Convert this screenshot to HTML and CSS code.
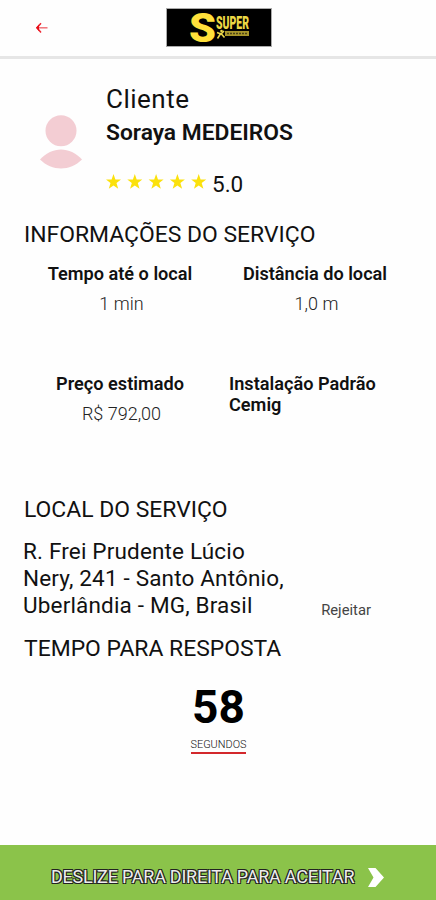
FILE: index.html
```
<!DOCTYPE html>
<html lang="pt-BR">
<head>
    <meta charset="UTF-8">
    <meta name="viewport" content="width=device-width, initial-scale=1.0">
    <title>Novo serviço</title>
    <link rel="stylesheet" href="styles.css">
</head>
<body>
    <header class="header">
        <svg class="back" viewBox="0 0 14 12" width="14" height="12">
            <path d="M6 1.200L2 5.800l4 4.600" fill="none" stroke="#ee2530" stroke-width="1.500"/>
            <path d="M2 5.800h10.500" stroke="#f0747a" stroke-width="1.500"/>
            <path d="M1 5.800l3-3.400v6.800z" fill="#e80d18"/>
        </svg>
        <svg class="logo" viewBox="0 0 106 39" width="106" height="39">
            <rect x=".5" y=".5" width="105" height="38" fill="#000" stroke="#aaa"/>
            <text class="logo-s" x="23" y="34" textLength="27" lengthAdjust="spacingAndGlyphs">S</text>
            <text class="logo-super" x="50" y="21" textLength="33" lengthAdjust="spacingAndGlyphs">SUPER</text>
            <rect x="59" y="23" width="24" height="5" fill="#a8962b"/>
            <path d="M61 25.500h20" stroke="#4b4416" stroke-width="1.500" stroke-dasharray="2 1"/>
            <path d="M51 24.500l4 1.500 3-3M55 25l-3.500 5.500M55 25.500l3.500 4" fill="none" stroke="#e9d64a" stroke-width="1.600"/>
            <circle cx="55.500" cy="23" r="1.300" fill="#e9d64a"/>
        </svg>
    </header>

    <main class="content">
        <section class="client">
            <svg class="avatar" viewBox="0 0 42 54" width="42" height="54">
                <circle cx="21" cy="15.700" r="15.500" fill="#f3cdd3"/>
                <path d="M0 44.500C12 31 30 31 42 44.500C30 56.500 12 56.500 0 44.500z" fill="#f3cdd3"/>
            </svg>
            <div class="client-info">
                <p class="client-label">Cliente</p>
                <p class="client-name">Soraya MEDEIROS</p>
                <div class="rating">
                    <svg class="stars" viewBox="0 0 101 16" width="101" height="16">
                        <defs>
                            <path id="star" d="M7.500 0l1.900 5.500 5.600.1-4.500 3.500 1.700 5.700-4.700-3.400-4.700 3.400 1.700-5.700L0 5.600l5.600-.1z" fill="#fbe10c"/>
                        </defs>
                        <use href="#star" x="0"/>
                        <use href="#star" x="21.300"/>
                        <use href="#star" x="42.600"/>
                        <use href="#star" x="63.900"/>
                        <use href="#star" x="85.200"/>
                    </svg>
                    <span class="score">5.0</span>
                </div>
            </div>
        </section>

        <h2 class="title title-info">INFORMAÇÕES DO SERVIÇO</h2>
        <section class="grid">
            <div class="item">
                <h3>Tempo até o local</h3>
                <p>1 min</p>
            </div>
            <div class="item">
                <h3>Distância do local</h3>
                <p>1,0 m</p>
            </div>
            <div class="item">
                <h3>Preço estimado</h3>
                <p>R$ 792,00</p>
            </div>
            <div class="item item-left">
                <h3>Instalação Padrão Cemig</h3>
            </div>
        </section>

        <h2 class="title title-place">LOCAL DO SERVIÇO</h2>
        <section class="place">
            <p class="address">R. Frei Prudente Lúcio<br>Nery, 241 - Santo Antônio,<br>Uberlândia - MG, Brasil</p>
            <a class="reject">Rejeitar</a>
        </section>

        <h2 class="title title-time">TEMPO PARA RESPOSTA</h2>
        <section class="timer">
            <strong>58</strong>
            <span>SEGUNDOS</span>
        </section>
    </main>

    <footer class="accept">
        <span>DESLIZE PARA DIREITA PARA ACEITAR</span>
        <svg viewBox="0 0 16 19" width="16" height="19">
            <path d="M0 0h7.500L16 9.500 7.500 19H0l5.500-9.500z" fill="#fff"/>
        </svg>
    </footer>
</body>
</html>
```
FILE: styles.css
```
* {
    box-sizing: border-box;
    margin: 0;
    padding: 0;
}
body {
    display: flex;
    flex-direction: column;
    height: 900px;
    background: #fefefe;
    color: #111;
    font-family: Roboto, "Liberation Sans", sans-serif;
}
.header {
    display: flex;
    align-items: flex-start;
    height: 59px;
    padding: 8px 0 0 35px;
    border-bottom: 3px solid #e6e6e6;
}
.back {
    margin-top: 14px;
}
.logo {
    margin-left: 117px;
    overflow: visible;
}
.logo-s {
    font-size: 41px;
    font-weight: 900;
    fill: #ffe03a;
}
.logo-super {
    font-size: 18px;
    font-weight: 900;
    fill: #ecd845;
}
.content {
    flex: 1;
    padding: 25px 23px 0;
}
.client {
    display: flex;
    height: 120px;
    padding-left: 17px;
}
.avatar {
    margin-top: 31px;
}
.client-info {
    margin-left: 24px;
    white-space: nowrap;
}
.client-label {
    font-size: 26px;
    line-height: 30px;
    letter-spacing: 0.5px;
}
.client-name {
    margin-top: 4px;
    font-size: 22.8px;
    font-weight: 600;
    line-height: 30px;
}
.rating {
    display: flex;
    align-items: center;
    margin-top: 21px;
    line-height: 30px;
}
.stars {
    margin-top: -4px;
}
.score {
    margin-left: 5px;
    font-size: 22.5px;
}
.title {
    padding-left: 1px;
    font-size: 22.9px;
    font-weight: 400;
    line-height: 30px;
    white-space: nowrap;
}
.title-info {
    margin-top: 16px;
}
.grid {
    display: grid;
    grid-template-columns: 195px 195px;
    grid-template-rows: 110px 110px;
    margin-top: 13px;
    color: #222;
}
.item {
    text-align: center;
    font-size: 18px;
}
.item h3 {
    margin-left: -1px;
    font-size: 18.15px;
    font-weight: 600;
    line-height: 21px;
    color: #111;
}
.item p {
    margin: 9px 0 0 2px;
    font-weight: 300;
    line-height: 21px;
}
.item-left {
    padding: 0 20px 0 12px;
    text-align: left;
}
.title-place {
    margin-top: 12px;
}
.place {
    display: flex;
    justify-content: space-between;
    align-items: flex-end;
    margin-top: 13px;
    padding-right: 42px;
}
.address {
    font-size: 22.5px;
    line-height: 27px;
    letter-spacing: 0.17px;
    white-space: nowrap;
}
.reject {
    margin-bottom: 1px;
    font-size: 14.8px;
    line-height: 16px;
    color: #444;
}
.title-time {
    margin-top: 15px;
}
.timer {
    display: flex;
    flex-direction: column;
    align-items: center;
    margin: 18px 0 0 1px;
}
.timer strong {
    font-size: 46px;
    line-height: 50px;
    color: #000;
}
.timer span {
    margin-top: 7px;
    padding-bottom: 1px;
    border-bottom: 2px solid #d3282c;
    font-size: 10.9px;
    font-weight: 300;
    line-height: 12px;
}
.accept {
    display: flex;
    align-items: center;
    height: 55px;
    padding: 9px 0 0 51px;
    background: #8bc34a;
}
.accept span {
    font-size: 18px;
    line-height: 22px;
    letter-spacing: -0.24px;
    color: #eee;
    text-shadow: -1px -1px 0 #222, 1px -1px 0 #222, -1px 1px 0 #222, 1px 1px 0 #222;
    white-space: nowrap;
}
.accept svg {
    margin-left: 14px;
}
```
